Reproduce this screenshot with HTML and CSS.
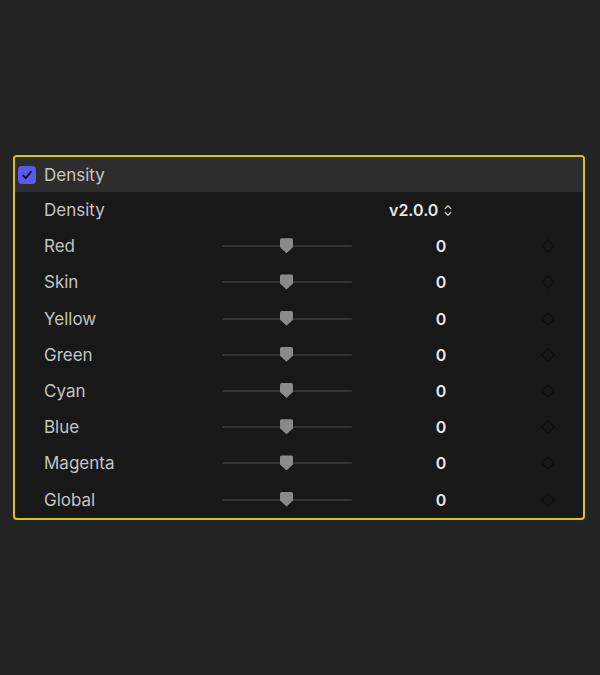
FILE: index.html
```html
<!DOCTYPE html>
<html>
<head>
<meta charset="utf-8">
<link rel="stylesheet" href="styles.css">
</head>
<body>
<div class="panel">
  <div class="header">
    <span class="check"><svg width="12" height="12" viewBox="0 0 12 12"><path d="M2 6.5 L4.8 9.2 L10 2.6" fill="none" stroke="#111" stroke-width="1.8" stroke-linecap="round" stroke-linejoin="round"/></svg></span>
    <span class="htitle">Density</span>
  </div>
  <div class="row">
    <span class="label">Density</span>
    <span></span>
    <span class="version">v2.0.0 <svg class="updown" width="8" height="13" viewBox="0 0 8 13"><path d="M1.2 4.6 L4 1.8 L6.8 4.6 M1.2 8.4 L4 11.2 L6.8 8.4" fill="none" stroke="#bdbdbd" stroke-width="1.4" stroke-linecap="round" stroke-linejoin="round"/></svg></span>
    <span></span>
  </div>
  <div class="row"><span class="label">Red</span><span class="slider"><span class="thumb"></span></span><span class="value">0</span><span class="kf"></span></div>
  <div class="row"><span class="label">Skin</span><span class="slider"><span class="thumb"></span></span><span class="value">0</span><span class="kf"></span></div>
  <div class="row"><span class="label">Yellow</span><span class="slider"><span class="thumb"></span></span><span class="value">0</span><span class="kf"></span></div>
  <div class="row"><span class="label">Green</span><span class="slider"><span class="thumb"></span></span><span class="value">0</span><span class="kf"></span></div>
  <div class="row"><span class="label">Cyan</span><span class="slider"><span class="thumb"></span></span><span class="value">0</span><span class="kf"></span></div>
  <div class="row"><span class="label">Blue</span><span class="slider"><span class="thumb"></span></span><span class="value">0</span><span class="kf"></span></div>
  <div class="row"><span class="label">Magenta</span><span class="slider"><span class="thumb"></span></span><span class="value">0</span><span class="kf"></span></div>
  <div class="row"><span class="label">Global</span><span class="slider"><span class="thumb"></span></span><span class="value">0</span><span class="kf"></span></div>
</div>
</body>
</html>
```
FILE: styles.css
```css
html, body {
  margin: 0;
  padding: 0;
  background: #232323;
  font-family: Inter, "Liberation Sans", sans-serif;
}
body {
  padding: 155px 15px 0 13px;
}
.panel {
  border: 2px solid #dcc21e;
  border-radius: 4px;
  background: #181818;
  overflow: hidden;
}
.header {
  height: 35px;
  background: #2d2d2d;
  display: flex;
  align-items: center;
  padding-left: 3px;
  gap: 8px;
}
.check {
  width: 18px;
  height: 18px;
  border-radius: 4px;
  background: #5a5af2;
  display: flex;
  align-items: center;
  justify-content: center;
}
.htitle {
  font-size: 17px;
  color: #c6c6c6;
}
.row {
  height: 36.2px;
  display: grid;
  grid-template-columns: 178px 130px 178px 1fr;
  align-items: center;
  padding-left: 29px;
}
.label {
  font-size: 17px;
  color: #c4c4c4;
}
.version {
  grid-column: 3;
  justify-self: start;
  margin-left: 37px;
  font-size: 16px;
  font-weight: 600;
  color: #e6e6e6;
  display: flex;
  align-items: center;
  gap: 6px;
}
.slider {
  height: 2px;
  background: #343434;
  border-radius: 1px;
  position: relative;
}
.thumb {
  position: absolute;
  left: 58px;
  top: -7px;
  width: 13px;
  height: 15px;
  background: #8a8a8a;
  clip-path: polygon(0 0, 100% 0, 100% 60%, 50% 100%, 0 60%);
  border-radius: 2px 2px 0 0;
}
.value {
  justify-self: center;
  font-size: 16px;
  font-weight: 600;
  color: #e8e8e8;
}
.kf {
  justify-self: start;
  width: 8px;
  height: 8px;
  border: 1.5px solid #0b0b0b;
  transform: rotate(45deg);
  margin-left: 13px;
}
```
